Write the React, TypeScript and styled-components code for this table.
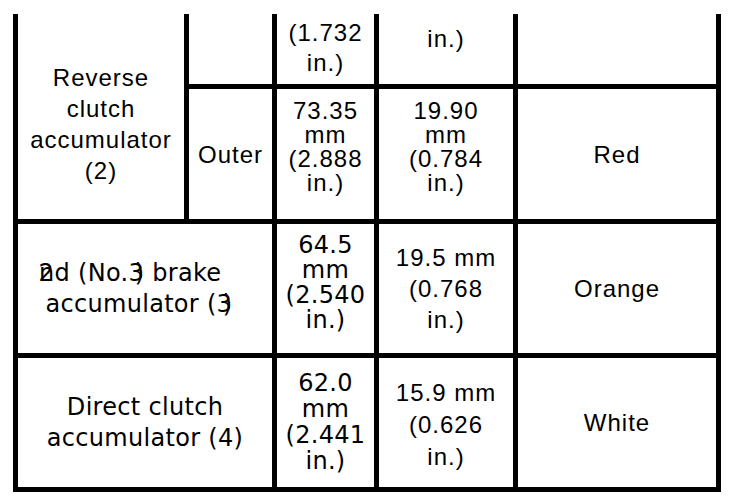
import styled, { createGlobalStyle } from "styled-components";

const GlobalStyle = createGlobalStyle`
  html, body {
    margin: 0;
    padding: 0;
    background: #fff;
  }
  body {
    font-family: "Liberation Sans", Arial, sans-serif;
    color: #000;
  }
`;

const Page = styled.div`
    padding: 14px 0 0 13px;`

const Table = styled.div`
    display: grid;
    grid-template-columns: 166px 83px 97px 134px 198px;
    grid-template-rows: 70px 130px 129px 129px;
    gap: 5px;
    padding: 0 5px 5px;
    background: #000;
    width: max-content;`

type CellProps = {
    $colSpan?: number;
    $rowSpan?: number;
    $valign?: "top" | "middle" | "bottom";
    $lh?: number;
    $pt?: number;
    $pb?: number;
    $wide?: boolean;
};

const Cell = styled.div<CellProps>`
    grid-column: span ${p => p.$colSpan ?? 1};
    grid-row: span ${p => p.$rowSpan ?? 1};
    background: #fff;
    display: flex;
    flex-direction: column;
    align-items: center;
    justify-content: ${p => p.$valign === "top" ? "flex-start" : p.$valign === "bottom" ? "flex-end" : "center"};
    padding: ${p => p.$pt ?? 0}px 0 ${p => p.$pb ?? 0}px;
    text-align: center;
    font-family: ${p => p.$wide ? `"DejaVu Sans", Verdana, sans-serif` : `"Liberation Sans", Arial, sans-serif`};
    font-size: 24px;
    letter-spacing: ${p => p.$wide ? 0.3 : 1}px;
    line-height: ${p => p.$lh ?? 31}px;
    white-space: nowrap;
    overflow: hidden;`

// a line whose centring still counts the width of glyphs that were drawn on top of others
const Line = styled.span<{ $trail?: number }>`
    padding-right: ${p => p.$trail ?? 0}px;`

// glyph printed over the previous one in the source
const Overlap = styled.span<{ $back: number }>`
    margin-left: -${p => p.$back}em;`

const Lines = ({ lines }: { lines: string[] }) => (
    <>
        {lines.map((l, i) => <Line key={i}>{l}</Line>)}
    </>
);

export default function App() {
    return (
        <>
            <GlobalStyle/>
            <Page>
                <Table>
                    <Cell $rowSpan={2} $pt={15}>
                        <Lines lines={["Reverse", "clutch", "accumulator", "(2)"]}/>
                    </Cell>
                    <Cell/>
                    <Cell $valign="bottom" $lh={30} $pb={6}>
                        <Lines lines={["(1.732", "in.)"]}/>
                    </Cell>
                    <Cell $valign="bottom" $lh={30} $pb={30}>
                        <Lines lines={["in.)"]}/>
                    </Cell>
                    <Cell/>

                    <Cell>Outer</Cell>
                    <Cell $valign="top" $lh={24} $pt={10}>
                        <Lines lines={["73.35", "mm", "(2.888", "in.)"]}/>
                    </Cell>
                    <Cell $valign="top" $lh={24} $pt={10}>
                        <Lines lines={["19.90", "mm", "(0.784", "in.)"]}/>
                    </Cell>
                    <Cell>Red</Cell>

                    <Cell $colSpan={2} $wide>
                        <Line $trail={30}>2<Overlap $back={0.63}>n</Overlap>d (No.3<Overlap $back={0.39}>)</Overlap> brake</Line>
                        <Line $trail={12}>accumulator (3<Overlap $back={0.39}>)</Overlap></Line>
                    </Cell>
                    <Cell $valign="top" $lh={25} $pt={9} $wide>
                        <Lines lines={["64.5", "mm", "(2.540", "in.)"]}/>
                    </Cell>
                    <Cell $lh={31}>
                        <Lines lines={["19.5 mm", "(0.768", "in.)"]}/>
                    </Cell>
                    <Cell>Orange</Cell>

                    <Cell $colSpan={2} $wide>
                        <Lines lines={["Direct clutch", "accumulator (4)"]}/>
                    </Cell>
                    <Cell $valign="top" $lh={26} $pt={12} $wide>
                        <Lines lines={["62.0", "mm", "(2.441", "in.)"]}/>
                    </Cell>
                    <Cell $lh={32} $pt={4}>
                        <Lines lines={["15.9 mm", "(0.626", "in.)"]}/>
                    </Cell>
                    <Cell>White</Cell>
                </Table>
            </Page>
        </>
    );
}
